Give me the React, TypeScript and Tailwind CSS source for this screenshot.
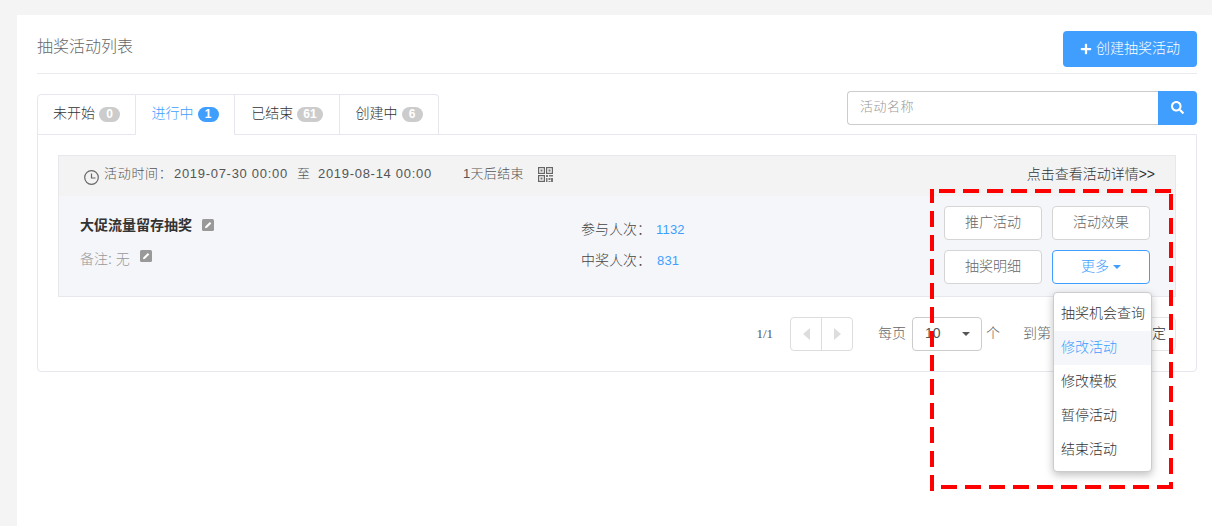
import { FaPlus, FaSearch } from "react-icons/fa";

const font = { fontFamily: '"Liberation Sans","Noto Sans CJK SC",sans-serif' };

function Tab({ label, n, active, cls }: { label: string; n: string; active?: boolean; cls: string }) {
  return (
    <div className={`flex items-center justify-center gap-[4px] h-[41px] border border-[#e6e6ee] border-l-0 first:border-l ${active ? "border-b-white text-[#409eff]" : "text-[#333]"} ${cls} bg-white`}>
      <span className="text-sm font-light pb-[4px]">{label}</span>
      <span className={`h-[15px] min-w-[21px] px-[6px] mb-[1px] rounded-full text-white text-xs font-bold leading-[15px] text-center ${active ? "bg-[#409eff]" : "bg-[#ccc]"}`}>{n}</span>
    </div>
  );
}

function Btn({ children }: { children: string }) {
  return (
    <div className="w-[98px] h-[34px] border border-[#d5d5d5] rounded-[4px] bg-white text-[#666] text-sm font-light flex items-center justify-center pb-[2px]">{children}</div>
  );
}

function Pencil() {
  return (
    <svg viewBox="0 0 12 12" width="12" height="12">
      <rect width="12" height="12" rx="1.5" fill="#999" />
      <path d="M3 9.2 3.5 7.3 7.8 3 9.3 4.5 5 8.8Z" fill="#fff" />
    </svg>
  );
}

function Qr() {
  return (
    <svg className="w-[15px] h-[15px]" viewBox="0 0 15 15" fill="none">
      <g stroke="#666" strokeWidth="1.2">
        <rect x="0.6" y="0.6" width="5.8" height="5.8" />
        <rect x="8.6" y="0.6" width="5.8" height="5.8" />
        <rect x="0.6" y="8.6" width="5.8" height="5.8" />
      </g>
      <g fill="#777">
        <rect x="2.5" y="2.5" width="2" height="2" />
        <rect x="10.5" y="2.5" width="2" height="2" />
        <rect x="2.5" y="10.5" width="2" height="2" />
        <rect x="8" y="8" width="2" height="2" />
        <rect x="11" y="8" width="4" height="1.5" />
        <rect x="8" y="11" width="1.5" height="4" />
        <rect x="10.5" y="11" width="2" height="2" />
        <rect x="13" y="11" width="2" height="4" />
        <rect x="10.5" y="14" width="2" height="1" />
      </g>
    </svg>
  );
}

const items = ["抽奖机会查询", "修改活动", "修改模板", "暂停活动", "结束活动"];

export default function App() {
  return (
    <div style={font} className="relative h-[526px] w-[1212px] overflow-hidden bg-[#f4f4f4] pl-[17px] pt-[15px]">
      <div className="h-full bg-white pl-5 pr-[15px]">
        <div className="flex justify-between items-start h-[59px] pt-4 border-b border-[#eaeaee]">
          <h1 className="text-base text-[#666] leading-8 font-light">抽奖活动列表</h1>
          <div className="w-[134px] h-9 rounded-[4px] bg-[#409eff] text-white text-sm font-light flex items-center justify-center gap-[4px]">
            <FaPlus className="w-3 h-3" />
            <span className="pb-[2px]">创建抽奖活动</span>
          </div>
        </div>

        <div className="flex justify-between items-start pt-[17px] relative z-10">
          <div className="flex mt-[3px] -mb-px">
            <Tab label="未开始" n="0" cls="w-[99px] rounded-tl-[4px]" />
            <Tab label="进行中" n="1" active cls="w-[99px]" />
            <Tab label="已结束" n="61" cls="w-[105px]" />
            <Tab label="创建中" n="6" cls="w-[99px] rounded-tr-[4px]" />
          </div>
          <div className="flex h-[34px]">
            <div className="w-[311px] border border-[#ccc] border-r-0 rounded-l-[4px] pl-3 pb-[2px] text-[13px] font-light text-[#999] tracking-[0.5px] flex items-center">活动名称</div>
            <div className="w-[39px] bg-[#409eff] rounded-r-[4px] flex items-center justify-center text-white pb-[2px]">
              <FaSearch className="w-[13px] h-[13px]" />
            </div>
          </div>
        </div>

        <div className="border border-[#e6e6ee] rounded-b-[4px] p-5 h-[238px]">
          <div className="border border-[#e8e8ec] h-[142px] flex flex-col bg-[#f5f6fa]">
            <div className="h-10 bg-[#f3f3f3] flex items-center pl-[25px] pr-[20px] text-[13px] font-light text-[#555] tracking-[0.7px]">
              <svg className="w-[15px] h-[15px] mt-[2px]" viewBox="0 0 15 15" fill="none" stroke="#666" strokeWidth="1.2">
                <circle cx="7.5" cy="7.5" r="6.8" />
                <path d="M7.5 3.5V8H11.5" />
              </svg>
              <span className="ml-[5px] w-[70px] pb-[4px]">活动时间：</span>
              <span className="w-[123px] pb-[4px]">2019-07-30 00:00</span>
              <span className="w-[21px] pb-[4px]">至</span>
              <span className="w-[145px] pb-[4px]">2019-08-14 00:00</span>
              <span className="w-[75px] tracking-[0.3px] pb-[4px]">1天后结束</span>
              <div className="pb-[4px]"><Qr /></div>
              <span className="ml-auto text-sm text-[#333] tracking-normal pb-[4px]">点击查看活动详情&gt;&gt;</span>
            </div>
            <div className="flex-1 flex pl-[21px] pr-[25px]">
              <div className="w-[501px]">
                <div className="flex items-center gap-[10px] mt-[20px] h-[18px] text-sm font-bold text-[#333]">
                  <span className="-mt-px">大促流量留存抽奖</span>
                  <Pencil />
                </div>
                <div className="flex items-start gap-[10px] mt-[16px] text-sm font-light text-[#999]">
                  <span className="-mt-px">备注: 无</span>
                  <Pencil />
                </div>
              </div>
              <div className="flex-1 text-sm font-light text-[#444] pt-[23px]">
                <div className="h-[20px] leading-5">参与人次：<span className="text-[#409eff] text-[13px] tracking-[0.2px] ml-[5px]">1132</span></div>
                <div className="h-[20px] leading-5 mt-[11px]">中奖人次：<span className="text-[#409eff] text-[13px] tracking-[0.2px] ml-[6px]">831</span></div>
              </div>
              <div className="w-[206px] pt-[10px] flex flex-col gap-[10px]">
                <div className="flex gap-[10px]"><Btn>推广活动</Btn><Btn>活动效果</Btn></div>
                <div className="flex gap-[10px]">
                  <Btn>抽奖明细</Btn>
                  <div className="relative w-[98px] h-[34px] border border-[#409eff] rounded-[4px] bg-white text-[#409eff] text-sm font-light flex items-center justify-center gap-[4px]">
                    <span className="pb-[3px]">更多</span>
                    <span className="w-0 h-0 border-x-[4px] border-x-transparent border-t-[4px] border-t-[#409eff]" />
                    <div className="absolute z-20 left-0 top-[41px] w-[99px] h-[180px] pt-[4px] bg-white border border-[#ccc] rounded-[4px] shadow-[0_3px_8px_rgba(0,0,0,0.25)]">
                      {items.map((t, i) => (
                        <div key={t} className={`h-[34px] pl-[7px] pb-[2px] flex items-center whitespace-nowrap text-sm ${i === 1 ? "bg-[#f5f6fa] text-[#409eff]" : "text-[#333]"}`}>{t}</div>
                      ))}
                    </div>
                  </div>
                </div>
              </div>
            </div>
          </div>

          <div className="mt-5 h-[34px] flex items-center justify-end text-sm font-light text-[#666]">
            <span className="text-[13px] text-[#555] mr-[17px]" style={{ fontFamily: '"Liberation Serif",serif' }}>1/1</span>
            <div className="flex w-[63px] h-[34px] border border-[#ddd] rounded-[4px] mr-[25px]">
              <div className="flex-1 flex items-center justify-center border-r border-[#ddd]">
                <span className="w-0 h-0 border-y-[6px] border-y-transparent border-r-[7px] border-r-[#ddd]" />
              </div>
              <div className="flex-1 flex items-center justify-center">
                <span className="w-0 h-0 border-y-[6px] border-y-transparent border-l-[7px] border-l-[#ddd]" />
              </div>
            </div>
            <span className="mr-[6px] pb-[3px]">每页</span>
            <div className="w-[70px] h-[34px] border border-[#ccc] rounded-[4px] flex items-center pl-[12px] pr-[11px] justify-between text-[#555]">
              <span className="pb-[2px]">10</span>
              <span className="w-0 h-0 border-x-[4px] border-x-transparent border-t-[4px] border-t-[#555]" />
            </div>
            <span className="ml-[4px] mr-[23px] pb-[3px]">个</span>
            <span className="pb-[3px]">到第</span>
            <div className="w-[50px] h-[34px] border border-[#ccc] rounded-[4px] mx-[3px]" />
            <span className="pb-[3px]">页</span>
            <div className="w-[48px] h-[34px] ml-[7px] border border-[#e6e6e6] rounded-[4px] flex items-center justify-center text-[#333] pb-[3px]">确定</div>
          </div>
        </div>
      </div>

      <svg className="absolute left-0 top-0 z-30 pointer-events-none" width="1212" height="526" fill="none" stroke="#f00" strokeWidth="4" strokeDasharray="16 8">
        <path d="M939 191H1171" />
        <path d="M1171 194V485" />
        <path d="M1173 487H935" />
        <path d="M932 491V189" />
      </svg>
    </div>
  );
}
